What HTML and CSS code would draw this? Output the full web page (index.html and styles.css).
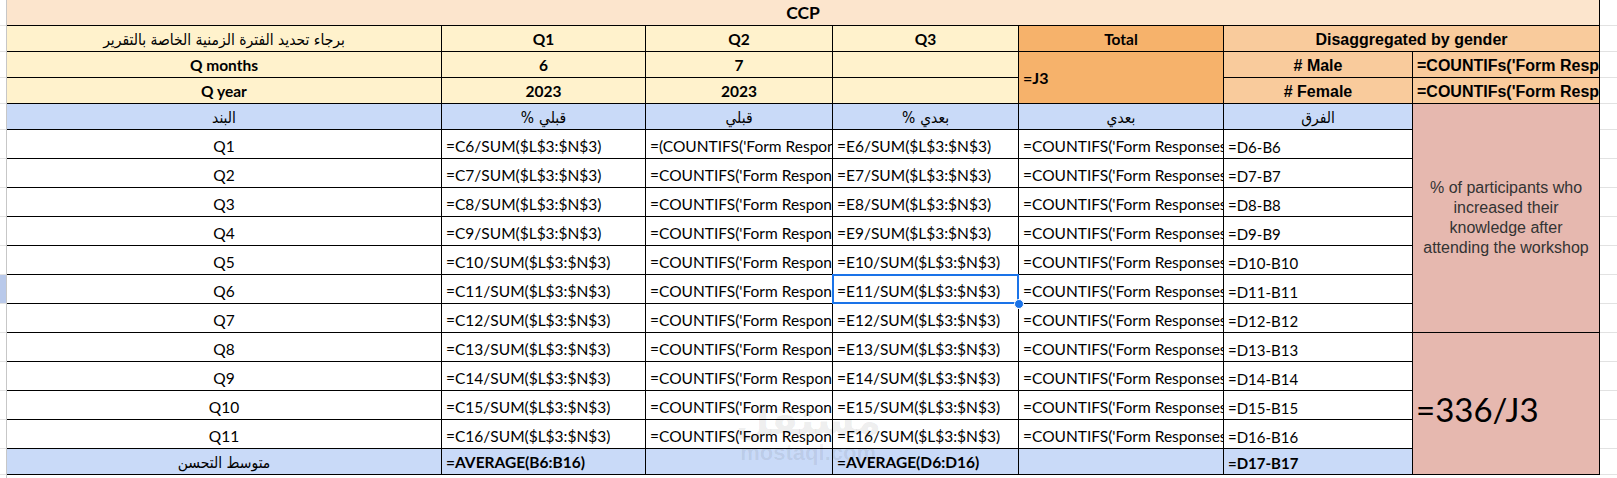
FILE: index.html
```html
<!DOCTYPE html>
<html lang="en">
<head>
<meta charset="utf-8">
<title>CCP</title>
<link rel="stylesheet" href="styles.css">
</head>
<body>
<div class="sheet">
  <div class="gutter">
    <div></div><div></div><div></div><div></div><div></div>
    <div></div><div></div><div></div><div></div><div></div><div class="sel"></div>
    <div></div><div></div><div></div><div></div><div></div>
    <div></div><div></div>
  </div>

  <div class="grid">
    <!-- row 1 -->
    <div class="c peach ctr b ccp span7">CCP</div>

    <!-- row 2 -->
    <div class="c yel ctr ar">برجاء تحديد الفترة الزمنية الخاصة بالتقرير</div>
    <div class="c yel ctr b">Q1</div>
    <div class="c yel ctr b">Q2</div>
    <div class="c yel ctr b">Q3</div>
    <div class="c org ctr b">Total</div>
    <div class="c lorg ctr arial span2">Disaggregated by gender</div>

    <!-- row 3 -->
    <div class="c yel ctr b">Q months</div>
    <div class="c yel ctr b">6</div>
    <div class="c yel ctr b">7</div>
    <div class="c yel"></div>
    <div class="c org b mid rspan2">=J3</div>
    <div class="c lorg ctr arial"># Male</div>
    <div class="c lorg arial">=COUNTIFs('Form Responses</div>

    <!-- row 4 -->
    <div class="c yel ctr b">Q year</div>
    <div class="c yel ctr b">2023</div>
    <div class="c yel ctr b">2023</div>
    <div class="c yel"></div>
    <div class="c lorg ctr arial"># Female</div>
    <div class="c lorg arial">=COUNTIFs('Form Responses</div>

    <!-- row 5 -->
    <div class="c blue ctr ar">البند</div>
    <div class="c blue ctr ar pct"><span>%</span><span>قبلي</span></div>
    <div class="c blue ctr ar">قبلي</div>
    <div class="c blue ctr ar pct"><span>%</span><span>بعدي</span></div>
    <div class="c blue ctr ar">بعدي</div>
    <div class="c blue ctr ar">الفرق</div>
    <div class="c pink note rspan8">% of participants who<br>increased their<br>knowledge after<br>attending the workshop</div>

    <!-- rows 6-16 -->
    <div class="c ctr">Q1</div>
    <div class="c">=C6/SUM($L$3:$N$3)</div>
    <div class="c">=(COUNTIFS('Form Responses 1'!D:D</div>
    <div class="c">=E6/SUM($L$3:$N$3)</div>
    <div class="c">=COUNTIFS('Form Responses 1'!E:E</div>
    <div class="c f">=D6-B6</div>

    <div class="c ctr">Q2</div>
    <div class="c">=C7/SUM($L$3:$N$3)</div>
    <div class="c">=COUNTIFS('Form Responses 1'!D:D</div>
    <div class="c">=E7/SUM($L$3:$N$3)</div>
    <div class="c">=COUNTIFS('Form Responses 1'!E:E</div>
    <div class="c f">=D7-B7</div>

    <div class="c ctr">Q3</div>
    <div class="c">=C8/SUM($L$3:$N$3)</div>
    <div class="c">=COUNTIFS('Form Responses 1'!D:D</div>
    <div class="c">=E8/SUM($L$3:$N$3)</div>
    <div class="c">=COUNTIFS('Form Responses 1'!E:E</div>
    <div class="c f">=D8-B8</div>

    <div class="c ctr">Q4</div>
    <div class="c">=C9/SUM($L$3:$N$3)</div>
    <div class="c">=COUNTIFS('Form Responses 1'!D:D</div>
    <div class="c">=E9/SUM($L$3:$N$3)</div>
    <div class="c">=COUNTIFS('Form Responses 1'!E:E</div>
    <div class="c f">=D9-B9</div>

    <div class="c ctr">Q5</div>
    <div class="c">=C10/SUM($L$3:$N$3)</div>
    <div class="c">=COUNTIFS('Form Responses 1'!D:D</div>
    <div class="c">=E10/SUM($L$3:$N$3)</div>
    <div class="c">=COUNTIFS('Form Responses 1'!E:E</div>
    <div class="c f">=D10-B10</div>

    <div class="c ctr">Q6</div>
    <div class="c">=C11/SUM($L$3:$N$3)</div>
    <div class="c">=COUNTIFS('Form Responses 1'!D:D</div>
    <div class="c selected">=E11/SUM($L$3:$N$3)<span class="handle"></span></div>
    <div class="c">=COUNTIFS('Form Responses 1'!E:E</div>
    <div class="c f">=D11-B11</div>

    <div class="c ctr">Q7</div>
    <div class="c">=C12/SUM($L$3:$N$3)</div>
    <div class="c">=COUNTIFS('Form Responses 1'!D:D</div>
    <div class="c">=E12/SUM($L$3:$N$3)</div>
    <div class="c">=COUNTIFS('Form Responses 1'!E:E</div>
    <div class="c f">=D12-B12</div>

    <div class="c ctr">Q8</div>
    <div class="c">=C13/SUM($L$3:$N$3)</div>
    <div class="c">=COUNTIFS('Form Responses 1'!D:D</div>
    <div class="c">=E13/SUM($L$3:$N$3)</div>
    <div class="c">=COUNTIFS('Form Responses 1'!E:E</div>
    <div class="c f">=D13-B13</div>
    <div class="c pink big rspan5">=336/J3</div>

    <div class="c ctr">Q9</div>
    <div class="c">=C14/SUM($L$3:$N$3)</div>
    <div class="c">=COUNTIFS('Form Responses 1'!D:D</div>
    <div class="c">=E14/SUM($L$3:$N$3)</div>
    <div class="c">=COUNTIFS('Form Responses 1'!E:E</div>
    <div class="c f">=D14-B14</div>

    <div class="c ctr">Q10</div>
    <div class="c">=C15/SUM($L$3:$N$3)</div>
    <div class="c">=COUNTIFS('Form Responses 1'!D:D</div>
    <div class="c">=E15/SUM($L$3:$N$3)</div>
    <div class="c">=COUNTIFS('Form Responses 1'!E:E</div>
    <div class="c f">=D15-B15</div>

    <div class="c ctr">Q11</div>
    <div class="c">=C16/SUM($L$3:$N$3)</div>
    <div class="c">=COUNTIFS('Form Responses 1'!D:D</div>
    <div class="c">=E16/SUM($L$3:$N$3)</div>
    <div class="c">=COUNTIFS('Form Responses 1'!E:E</div>
    <div class="c f">=D16-B16</div>

    <!-- row 17 -->
    <div class="c blue ctr ar">متوسط التحسن</div>
    <div class="c blue b">=AVERAGE(B6:B16)</div>
    <div class="c blue"></div>
    <div class="c blue b">=AVERAGE(D6:D16)</div>
    <div class="c blue"></div>
    <div class="c blue b f">=D17-B17</div>
  </div>

  <div class="filler">
    <div></div><div></div><div></div><div></div><div></div>
    <div></div><div></div><div></div><div></div><div></div><div></div>
    <div></div><div></div><div></div><div></div><div></div>
    <div></div><div></div>
  </div>

  <div class="watermark">
    <span class="wm-ar">مستقل</span>
    <span class="wm-en">mostaql.com</span>
  </div>
</div>
</body>
</html>
```

FILE: styles.css
```css
* { box-sizing: border-box; }

html, body {
  margin: 0;
  padding: 0;
  background: #fff;
}

body {
  font-family: Lato, "DejaVu Sans", sans-serif;
  font-size: 15.5px;
  color: #000;
}

.sheet {
  --rows: 25px 25px 25px 25px 25px repeat(11, 28px) 25px;
  position: relative;
  display: flex;
  width: 1617px;
  height: 478px;
  overflow: hidden;
}

/* row-header remnant on the left */
.gutter {
  width: 7px;
  flex: 0 0 7px;
  display: grid;
  grid-template-rows: var(--rows) 1fr;
  row-gap: 1px;
  background: #e2e2e2;
  border-right: 1px solid #c7c7c7;
}
.gutter div { background: #fff; }
.gutter .sel {
  background-color: #e8eefb;
  background-image: radial-gradient(#b9c9ea 0.8px, transparent 1px);
  background-size: 2px 2px;
}

/* empty area on the right */
.filler {
  flex: 1 1 auto;
  display: grid;
  grid-template-rows: var(--rows) 1fr;
  row-gap: 1px;
  background: #e2e2e2;
  align-self: stretch;
}
.filler div { background: #fff; }

/* the table */
.grid {
  align-self: flex-start;
  display: grid;
  grid-template-columns: 434px 203px 186px 185px 204px 188px 186px;
  grid-template-rows: var(--rows);
  gap: 1px;
  background: #000;
  border-right: 1px solid #000;
  border-bottom: 1px solid #000;
}

.c {
  display: flex;
  align-items: flex-end;
  justify-content: flex-start;
  padding: 0 4px 2px 4px;
  white-space: nowrap;
  overflow: hidden;
  background: #fff;
  line-height: 1.2;
}

.ctr { justify-content: center; }
.mid { align-items: center; padding-bottom: 0; font-size: 16px; }
.b { font-weight: 700; }

.ar {
  font-family: "DejaVu Sans Condensed", "DejaVu Sans", sans-serif;
  font-size: 15.5px;
  padding-bottom: 1px;
}
.pct { gap: 5px; }

.span7 { grid-column: span 7; }
.span2 { grid-column: span 2; }
.rspan2 { grid-row: span 2; }
.rspan8 { grid-row: span 8; }
.rspan5 { grid-row: span 5; }

.ccp { font-size: 17.5px; padding-bottom: 2px; }

.arial {
  font-family: "Liberation Sans", Arial, sans-serif;
  font-size: 16px;
  font-weight: 700;
  padding-bottom: 2px;
}

.f { font-size: 15px; }

/* fills */
.peach { background: #fce5cd; }
.yel   { background: #fff2cc; }
.org   { background: #f6b26b; }
.lorg  { background: #f9cb9c; }
.blue  { background: #c9daf8; }
.pink  { background: #e6b8af; }

.note {
  align-items: center;
  justify-content: center;
  text-align: center;
  white-space: normal;
  font-family: "Liberation Sans", Arial, sans-serif;
  font-size: 16px;
  line-height: 20px;
  color: #333;
  padding: 0 4px;
}

.big {
  align-items: center;
  font-size: 33px;
  padding: 12px 3px 0 3px;
}

/* selected cell */
.selected {
  position: relative;
  overflow: visible;
  z-index: 2;
}
.selected::after {
  content: "";
  position: absolute;
  left: -1px;
  top: -1px;
  right: -1px;
  bottom: -1px;
  border: 2px solid #1a73e8;
  pointer-events: none;
}
.handle {
  position: absolute;
  right: -6px;
  bottom: -6px;
  width: 10px;
  height: 10px;
  border-radius: 50%;
  background: #1a73e8;
  border: 1px solid #fff;
  z-index: 3;
}

/* faint site watermark */
.watermark {
  position: absolute;
  left: 735px;
  top: 400px;
  display: flex;
  flex-direction: column;
  align-items: center;
  color: rgba(0, 0, 0, 0.07);
  pointer-events: none;
  line-height: 1;
}
.wm-ar {
  font-family: "DejaVu Sans", sans-serif;
  font-weight: 700;
  font-size: 40px;
}
.wm-en {
  font-family: "Liberation Sans", Arial, sans-serif;
  font-weight: 700;
  font-size: 22px;
  margin-top: 2px;
}
```
